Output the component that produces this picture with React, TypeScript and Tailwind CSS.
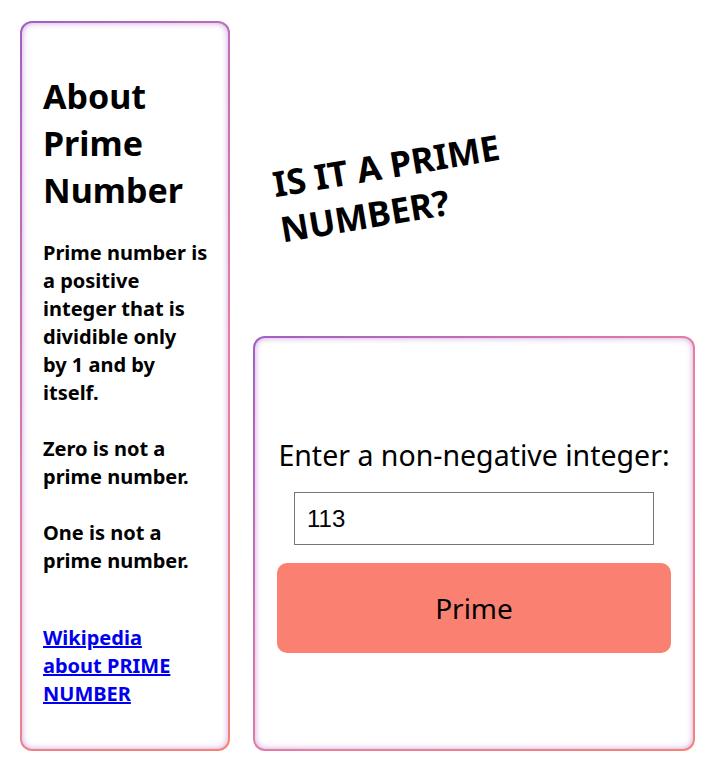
export default function App() {
  const card =
    'rounded-[12px] border-2 border-transparent [background:linear-gradient(#fff,#fff)_padding-box,linear-gradient(135deg,#a15fc4,#e87fa0_55%,#fa8072)_border-box] shadow-[inset_0_0_6px_rgba(170,100,200,0.6)]';
  return (
    <div className="min-h-screen bg-white pl-5 pr-[13px] pt-[21px] text-black [font-family:'Noto_Sans',sans-serif]">
      <div className="flex gap-[23px]">
        <aside className={`${card} w-[210px] h-[730px] shrink-0 pl-[21px] pr-4 pt-[50px]`}>
          <h1 className="text-[34px] font-bold leading-[47px]">About Prime Number</h1>
          <div className="mt-[25px] text-[20px] font-bold leading-[28px]">
            <p>
              Prime number is a positive
              <br />
              integer that is dividible only
              <br />
              by 1 and by itself.
            </p>
            <p className="mt-[28px]">Zero is not a prime number.</p>
            <p className="mt-[28px]">One is not a prime number.</p>
            <a href="#" className="mt-[49px] block w-[150px] text-[#0000ee] underline">
              Wikipedia about PRIME NUMBER
            </a>
          </div>
        </aside>
        <main className="flex flex-1 flex-col">
          <div className="flex h-[315px] items-start pl-[22px] pt-[117px]">
            <h2 className="-rotate-[9.5deg] text-[35px] font-bold uppercase leading-[46px] w-[280px]">
              Is it a prime number?
            </h2>
          </div>
          <section className={`${card} h-[415px] px-[22px] pt-[97px]`}>
            <label className="block text-center text-[28.5px] leading-[40px]">
              Enter a non-negative integer:
            </label>
            <div className="mt-[17px] flex justify-center">
              <input
                defaultValue="113"
                className="h-[53px] w-[360px] border border-[#767676] px-3 text-[24px] [font-family:'Liberation_Sans',sans-serif] outline-none"
              />
            </div>
            <button className="mt-[18px] h-[90px] w-full rounded-[10px] bg-[#fa8072] text-[28px]">
              Prime
            </button>
          </section>
        </main>
      </div>
    </div>
  );
}
